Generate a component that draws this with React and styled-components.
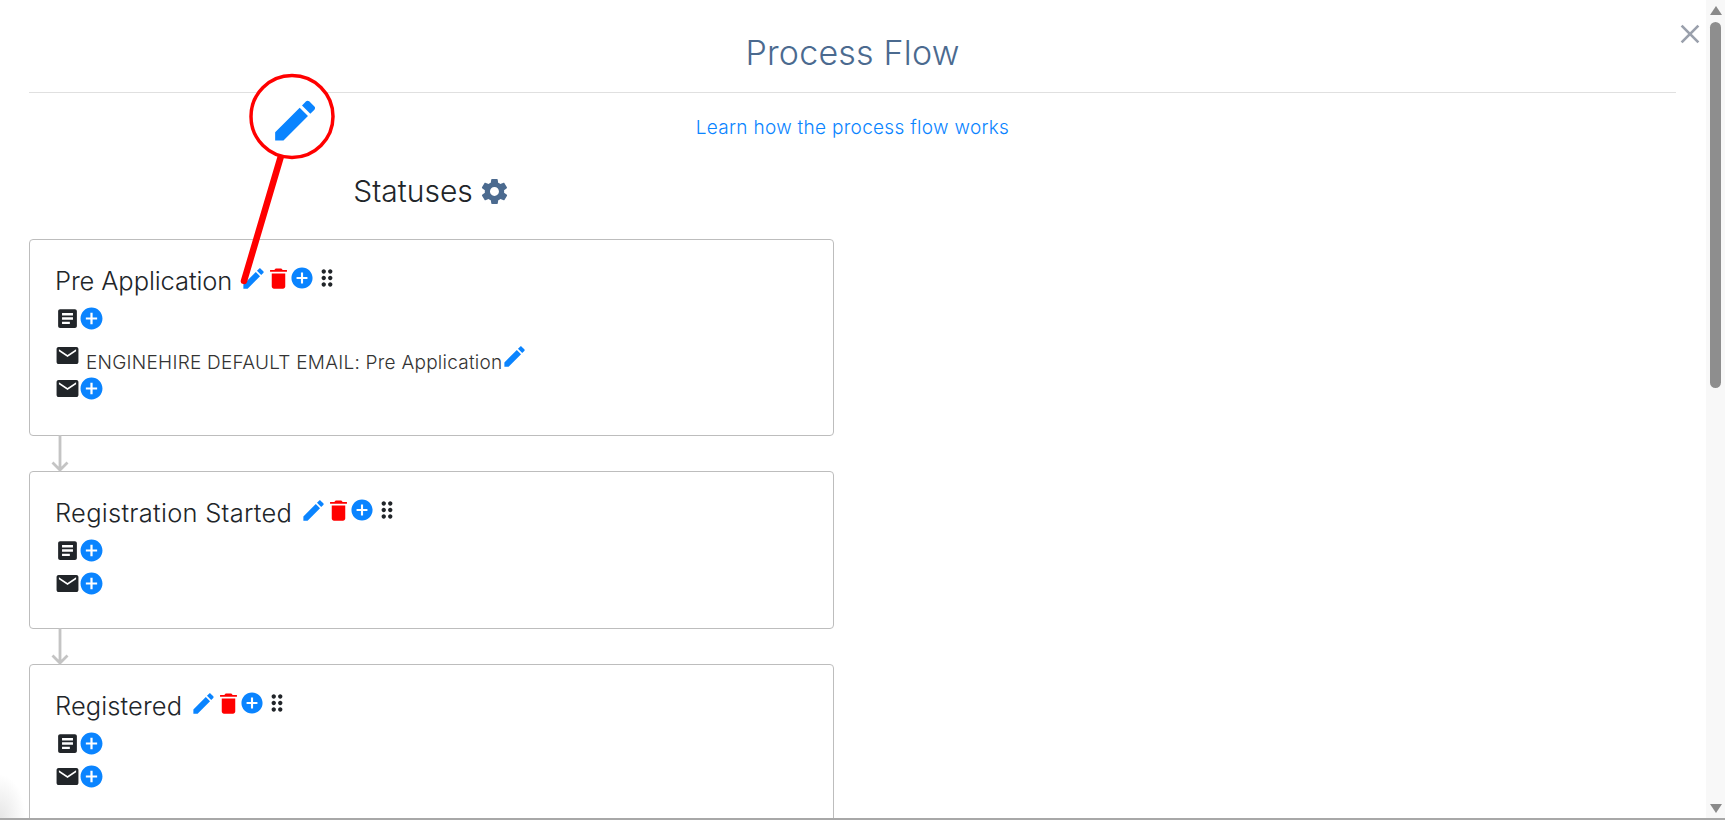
import React from "react";
import styled, { createGlobalStyle } from "styled-components";
import { IoMdCreate, IoMdTrash, IoMdAddCircle, IoMdListBox, IoMdMail, IoMdSettings, IoMdClose } from "react-icons/io";
import { MdDragIndicator } from "react-icons/md";

const Global = createGlobalStyle`
  html, body { margin: 0; padding: 0; background: #fff; overflow: hidden; }
  body { font-family: Inter, "Open Sans", sans-serif; color: #212529; }
`;

const Page = styled.div`
  position: relative;
  display: flex;
  width: 1725px;
  height: 820px;
  overflow: hidden;
  box-sizing: border-box;
  border-bottom: 2px solid #a8a8a8;
`;
const Main = styled.main`
  position: relative;
  flex: 1;
  min-width: 0;
  padding: 0 30px 0 29px;
`;
const Header = styled.header`
  height: 93px;
  box-sizing: border-box;
  border-bottom: 1px solid #e0e0e0;
  display: flex;
  align-items: center;
  justify-content: center;
  padding-top: 12px;
`;
const Title = styled.h1`
  margin: 0;
  font-size: 34px;
  font-weight: 300;
  letter-spacing: 0.2px;
  color: #4b6a8f;
`;
const Close = styled.button`
  position: absolute;
  top: 22px;
  right: 4px;
  width: 24px;
  height: 24px;
  padding: 0;
  border: 0;
  background: none;
  color: #9aa0ac;
  font-size: 32px;
  display: flex;
  align-items: center;
  justify-content: center;
  svg { flex: none; }
`;
const LearnRow = styled.div`
  text-align: center;
  height: 30px;
  margin-top: 20px;
  line-height: 30px;
`;
const Learn = styled.a`
  color: #0a84ff;
  font-size: 19px;
  font-weight: 300;
  letter-spacing: 0.3px;
`;
const Column = styled.section`
  width: 805px;
  margin-top: 31px;
`;
const Heading = styled.h2`
  margin: 0 0 31px;
  height: 34px;
  display: flex;
  align-items: center;
  justify-content: center;
  gap: 6px;
  font-size: 30px;
  font-weight: 300;
  color: #212529;
  svg { color: #4b6a8f; font-size: 31px; }
`;
const Card = styled.article`
  box-sizing: border-box;
  width: 805px;
  height: ${(p) => p.$h}px;
  border: 1px solid #bdbdbd;
  border-radius: 4px;
  padding: 25px 25px 0;
  flex: none;
`;
const Connector = styled.div`
  height: 36px;
  width: 805px;
  padding-left: 21px;
  box-sizing: border-box;
  color: #c4c4c4;
  svg { display: block; margin-top: -1px; }
`;
const StatusRow = styled.div`
  display: flex;
  align-items: flex-start;
  height: 41px;
`;
const StatusName = styled.span`
  font-size: 25.5px;
  font-weight: 300;
  letter-spacing: ${(p) => p.$ls}px;
  line-height: 30px;
  margin-top: 1px;
  margin-right: 8px;
  color: #212529;
`;
const IconSlot = styled.span`
  display: inline-flex;
  flex: none;
  align-items: center;
  justify-content: center;
  width: ${(p) => p.$w}px;
  height: ${(p) => p.$s}px;
  font-size: ${(p) => p.$s}px;
  color: ${(p) => p.$c};
  svg { display: block; flex: none; }
`;
const ToolRow = styled.div`
  display: flex;
  align-items: center;
  height: ${(p) => p.$h}px;
`;
const EmailRow = styled.div`
  display: flex;
  align-items: flex-start;
  height: 33px;
  margin-top: ${(p) => p.$top || 0}px;
`;
const EmailName = styled.span`
  font-size: 19px;
  font-weight: 300;
  letter-spacing: 0.25px;
  line-height: 24px;
  margin: 8px 0 0 7px;
  color: #333;
`;
const Scrollbar = styled.aside`
  width: 19px;
  flex: none;
  background: #f8f8f8;
  display: flex;
  flex-direction: column;
  align-items: center;
`;
const Arrow = styled.div`
  width: 0;
  height: 0;
  margin: ${(p) => (p.$down ? "auto 0 5px" : "6px 0 0")};
  border-left: 6.5px solid transparent;
  border-right: 6.5px solid transparent;
  ${(p) => (p.$down ? "border-top" : "border-bottom")}: 9px solid #8a8a8a;
`;
const Thumb = styled.div`
  width: 11px;
  height: 366px;
  margin-top: 7px;
  border-radius: 6px;
  background: #8e8e8e;
`;
const Callout = styled.svg`
  position: absolute;
  left: 220px;
  top: 60px;
  pointer-events: none;
`;
const CornerShade = styled.div`
  position: absolute;
  left: 0;
  bottom: 0;
  width: 26px;
  height: 44px;
  background: radial-gradient(ellipse at 0% 100%, #e6e6e6 0%, rgba(255, 255, 255, 0) 70%);
  pointer-events: none;
`;

const BLUE = "#0a84ff";
const DARK = "#212529";

const Status = ({ name, h, ls, children }) => (
  <Card $h={h}>
    <StatusRow>
      <StatusName $ls={ls}>{name}</StatusName>
      <IconSlot $w={26} $s={27} $c={BLUE}><IoMdCreate /></IconSlot>
      <IconSlot $w={24} $s={27} $c="#ff0000"><IoMdTrash /></IconSlot>
      <IconSlot $w={24} $s={26} $c={BLUE}><IoMdAddCircle /></IconSlot>
      <IconSlot $w={26} $s={26} $c={DARK}><MdDragIndicator /></IconSlot>
    </StatusRow>
    {children}
  </Card>
);

const TaskTools = () => (
  <ToolRow $h={24}>
    <IconSlot $w={25} $s={25} $c={DARK}><IoMdListBox /></IconSlot>
    <IconSlot $w={23} $s={27} $c={BLUE}><IoMdAddCircle /></IconSlot>
  </ToolRow>
);
const MailTools = () => (
  <ToolRow $h={24}>
    <IconSlot $w={25} $s={25} $c={DARK}><IoMdMail /></IconSlot>
    <IconSlot $w={23} $s={27} $c={BLUE}><IoMdAddCircle /></IconSlot>
  </ToolRow>
);
const Down = () => (
  <Connector>
    <svg width="20" height="37" viewBox="0 0 20 37"><path d="M10 0V35M2.5 27.5L10 35L17.5 27.5" fill="none" stroke="currentColor" strokeWidth="2.8" /></svg>
  </Connector>
);

export default function App() {
  return (
    <Page>
      <Global />
      <Main>
        <Header><Title>Process Flow</Title></Header>
        <Close aria-label="Close"><IoMdClose /></Close>
        <LearnRow><Learn>Learn how the process flow works</Learn></LearnRow>
        <Column>
          <Heading>Statuses <IoMdSettings /></Heading>
          <Status name="Pre Application" h={197} ls={-0.1}>
            <TaskTools />
            <EmailRow $top={13}>
              <IconSlot $w={24} $s={25} $c={DARK}><IoMdMail /></IconSlot>
              <EmailName>ENGINEHIRE DEFAULT EMAIL: Pre Application</EmailName>
              <IconSlot $w={24} $s={27} $c={BLUE}><IoMdCreate /></IconSlot>
            </EmailRow>
            <MailTools />
          </Status>
          <Down />
          <Status name="Registration Started" h={158} ls={0.27}>
            <TaskTools />
            <ToolRow $h={9} />
            <MailTools />
          </Status>
          <Down />
          <Status name="Registered" h={197} ls={0.1}>
            <TaskTools />
            <ToolRow $h={9} />
            <MailTools />
          </Status>
        </Column>
        <CornerShade />
      </Main>
      <Scrollbar>
        <Arrow />
        <Thumb />
        <Arrow $down />
      </Scrollbar>
      <Callout width="120" height="235" viewBox="0 0 120 235">
        <line x1="61" y1="96" x2="24" y2="221" stroke="#ff0000" strokeWidth="6.5" strokeLinecap="round" />
        <circle cx="72" cy="56.5" r="41" fill="#fff" stroke="#ff0000" strokeWidth="3.5" />
        <g transform="translate(48.5 34) scale(0.104)" fill={BLUE} style={{ filter: "blur(0.4px)" }}>
          <path d="M64 368v80h80l235.727-235.729-79.999-79.998L64 368zm377.602-217.602c8.531-8.531 8.531-21.334 0-29.865l-50.135-50.135c-8.531-8.531-21.334-8.531-29.865 0l-39.468 39.469 79.999 79.998 39.469-39.467z" />
        </g>
      </Callout>
    </Page>
  );
}
